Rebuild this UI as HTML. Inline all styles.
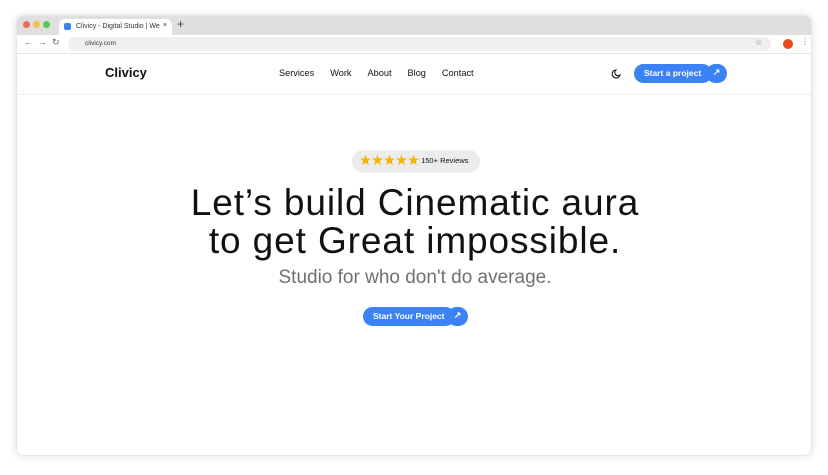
<!DOCTYPE html>
<html><head><meta charset="utf-8"><style>
*{box-sizing:border-box;margin:0;padding:0}
body{width:828px;height:475px;background:#fff;font-family:"Liberation Sans",sans-serif;position:relative;overflow:hidden}
.win{position:absolute;left:16px;top:15px;width:796px;height:441px;border-radius:8px;overflow:hidden;box-shadow:0 0 8px rgba(0,0,0,.12);background:#fff;border:1px solid #e6e6e6}
.tabbar{height:19px;background:#dfdfdf;position:relative}
.dot{position:absolute;top:5px;width:7px;height:7px;border-radius:50%}
.tab{position:absolute;left:42px;top:3px;width:113px;height:17px;background:#fff;border-radius:6px 6px 0 0;font-size:7px;color:#333;padding:4px 0 0 17px}
.tb{height:19px;background:#fff;position:relative;border-bottom:1px solid #e5e5e5}
.url{position:absolute;left:51px;top:2px;width:703px;height:14px;background:#efefef;border-radius:7px;font-size:6.5px;color:#333;padding:3px 0 0 17px}
.nav{position:absolute;left:0;top:38px;width:796px;height:41px;border-bottom:1px solid #eee}
.logo{position:absolute;left:88px;top:11px;font-size:13px;font-weight:bold;color:#111}
.links{position:absolute;left:262px;top:14px;font-size:9.2px;color:#111}
.links span{margin-right:16px}
.btn{position:absolute;background:#3b82f6;color:#fff;font-weight:bold;border-radius:10px}
h1{position:absolute;left:0;width:796px;text-align:center;font-size:37px;font-weight:normal;color:#111;letter-spacing:0.9px;line-height:38px}
</style></head><body>
<div class="win">
 <div class="tabbar">
  <div class="dot" style="left:6px;background:#ed6a5e"></div>
  <div class="dot" style="left:16px;background:#f5bf4f"></div>
  <div class="dot" style="left:26px;background:#61c554"></div>
  <div class="tab"><span style="position:absolute;left:5px;top:4px;width:7px;height:7px;background:#3b82f6;border-radius:2px"></span>Clivicy - Digital Studio | We<span style="position:absolute;right:5px;top:3px">×</span></div>
  <div style="position:absolute;left:160px;top:1px;font-size:12px;color:#444">+</div>
 </div>
 <div class="tb">
  <div style="position:absolute;left:7px;top:2px;font-size:9px;color:#666">←&nbsp;&nbsp;→&nbsp;&nbsp;↻</div>
  <div class="url">clivicy.com</div>
  <div style="position:absolute;left:738px;top:3px;font-size:8px;color:#555">☆</div>
  <div style="position:absolute;left:766px;top:4px;width:10px;height:10px;border-radius:50%;background:#e8491d"></div>
  <div style="position:absolute;left:784px;top:2px;font-size:8px;color:#555">⋮</div>
 </div>
 <div class="nav">
  <div class="logo">Clivicy</div>
  <div class="links"><span>Services</span><span>Work</span><span>About</span><span>Blog</span><span>Contact</span></div>
  <svg style="position:absolute;left:594px;top:15px" width="10" height="10" viewBox="0 0 10 10"><path d="M5 1A4 4 0 1 0 9 6 3 3 0 0 1 5 1z" fill="none" stroke="#111" stroke-width="1.1"/></svg>
  <div class="btn" style="left:617px;top:10px;width:78px;height:19px;font-size:8.5px;padding:4px 0 0 10px">Start a project</div>
  <div class="btn" style="left:689px;top:10px;width:21px;height:19px;font-size:9px;text-align:center;padding-top:3px">↗</div>
 </div>
 <div style="position:absolute;left:335px;top:134px;width:128px;height:23px;border-radius:12px;background:#ececec;font-size:7.5px;color:#111;padding:4px 0 0 7px;white-space:nowrap"><span style="color:#f4b400;font-size:14.5px;letter-spacing:-1px;position:relative;top:-1px">★★★★★</span>&nbsp;<span style="position:relative;top:-3px">150+ Reviews</span></div>
 <h1 style="top:168px">Let’s build Cinematic aura</h1>
 <h1 style="top:206px">to get Great impossible.</h1>
 <div style="position:absolute;left:0;width:796px;top:251px;text-align:center;font-size:19px;color:#707070">Studio for who don't do average.</div>
 <div class="btn" style="left:346px;top:291px;width:92px;height:19px;font-size:8.5px;padding:4px 0 0 10px">Start Your Project</div>
 <div class="btn" style="left:430px;top:291px;width:21px;height:19px;font-size:9px;text-align:center;padding-top:3px">↗</div>
</div>
</body></html>
